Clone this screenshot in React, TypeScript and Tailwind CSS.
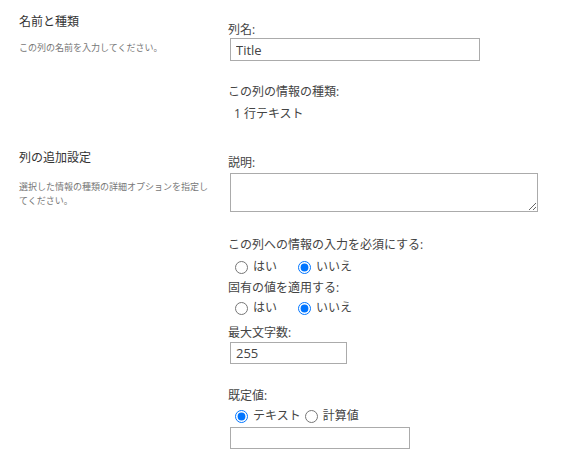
import * as React from "react";

const font = "font-['Open_Sans','Noto_Sans_CJK_JP',sans-serif]";

function Label({ children, className = "" }: { children: React.ReactNode; className?: string }) {
  return <div className={`text-[12px] leading-4 text-[#444] ${className}`}>{children}</div>;
}

function Radio({ checked, label, className = "" }: { checked?: boolean; label: string; className?: string }) {
  return (
    <label className={`flex items-center ${className}`}>
      <input
        type="radio"
        defaultChecked={checked}
        className="m-0 size-[13px] accent-[#0075ff]"
      />
      <span className="ml-[5px] text-[12px] text-[#444]">{label}</span>
    </label>
  );
}

export default function App() {
  return (
    <div className={`min-h-[452px] w-[584px] bg-white pt-[14px] pl-[19px] ${font}`}>
      {/* 名前と種類 */}
      <div className="flex">
        <div className="w-[209px] shrink-0">
          <div className="text-[12px] leading-4 text-[#333]">名前と種類</div>
          <div className="mt-[11px] text-[9px] leading-[14px] text-[#777]">
            この列の名前を入力してください。
          </div>
        </div>
        <div className="pt-[8px]">
          <Label>列名:</Label>
          <input
            defaultValue="Title"
            className="ml-[2px] block h-[23px] w-[250px] border border-[#ababab] px-[5px] text-[13px] text-[#444] outline-none"
          />
          <Label className="mt-[23px]">この列の情報の種類:</Label>
          <div className="mt-[6px] pl-[6px] text-[12px] leading-4 text-[#444]">1 行テキスト</div>
        </div>
      </div>

      {/* 列の追加設定 */}
      <div className="mt-[28px] flex">
        <div className="w-[209px] shrink-0">
          <div className="text-[12px] leading-4 text-[#333]">列の追加設定</div>
          <div className="mt-[14px] w-[192px] text-[9px] leading-[14px] text-[#777]">
            選択した情報の種類の詳細オプションを指定してください。
          </div>
        </div>
        <div className="pt-[5px]">
          <Label>説明:</Label>
          <textarea className="mt-[2px] ml-[2px] block h-[39px] w-[308px] border border-[#ababab] outline-none" />

          <Label className="mt-[25px]">この列への情報の入力を必須にする:</Label>
          <div className="mt-[4px] flex h-[20px] items-center pl-[7px]">
            <Radio label="はい" />
            <Radio label="いいえ" checked className="ml-[21px]" />
          </div>

          <Label className="mt-[3px]">固有の値を適用する:</Label>
          <div className="mt-[2px] flex h-[20px] items-center pl-[7px]">
            <Radio label="はい" />
            <Radio label="いいえ" checked className="ml-[21px]" />
          </div>

          <Label className="mt-[7px]">最大文字数:</Label>
          <input
            defaultValue="255"
            className="mt-[1px] ml-[2px] block h-[22px] w-[117px] border border-[#ababab] px-[5px] text-[13px] text-[#444] outline-none"
          />

          <Label className="mt-[24px]">既定値:</Label>
          <div className="mt-[2px] flex h-[20px] items-center pl-[7px]">
            <Radio label="テキスト" checked />
            <Radio label="計算値" className="ml-[4px]" />
          </div>
          <input className="mt-[1px] ml-[2px] block h-[22px] w-[180px] border border-[#ababab] px-[5px] text-[13px] outline-none" />
        </div>
      </div>
    </div>
  );
}
